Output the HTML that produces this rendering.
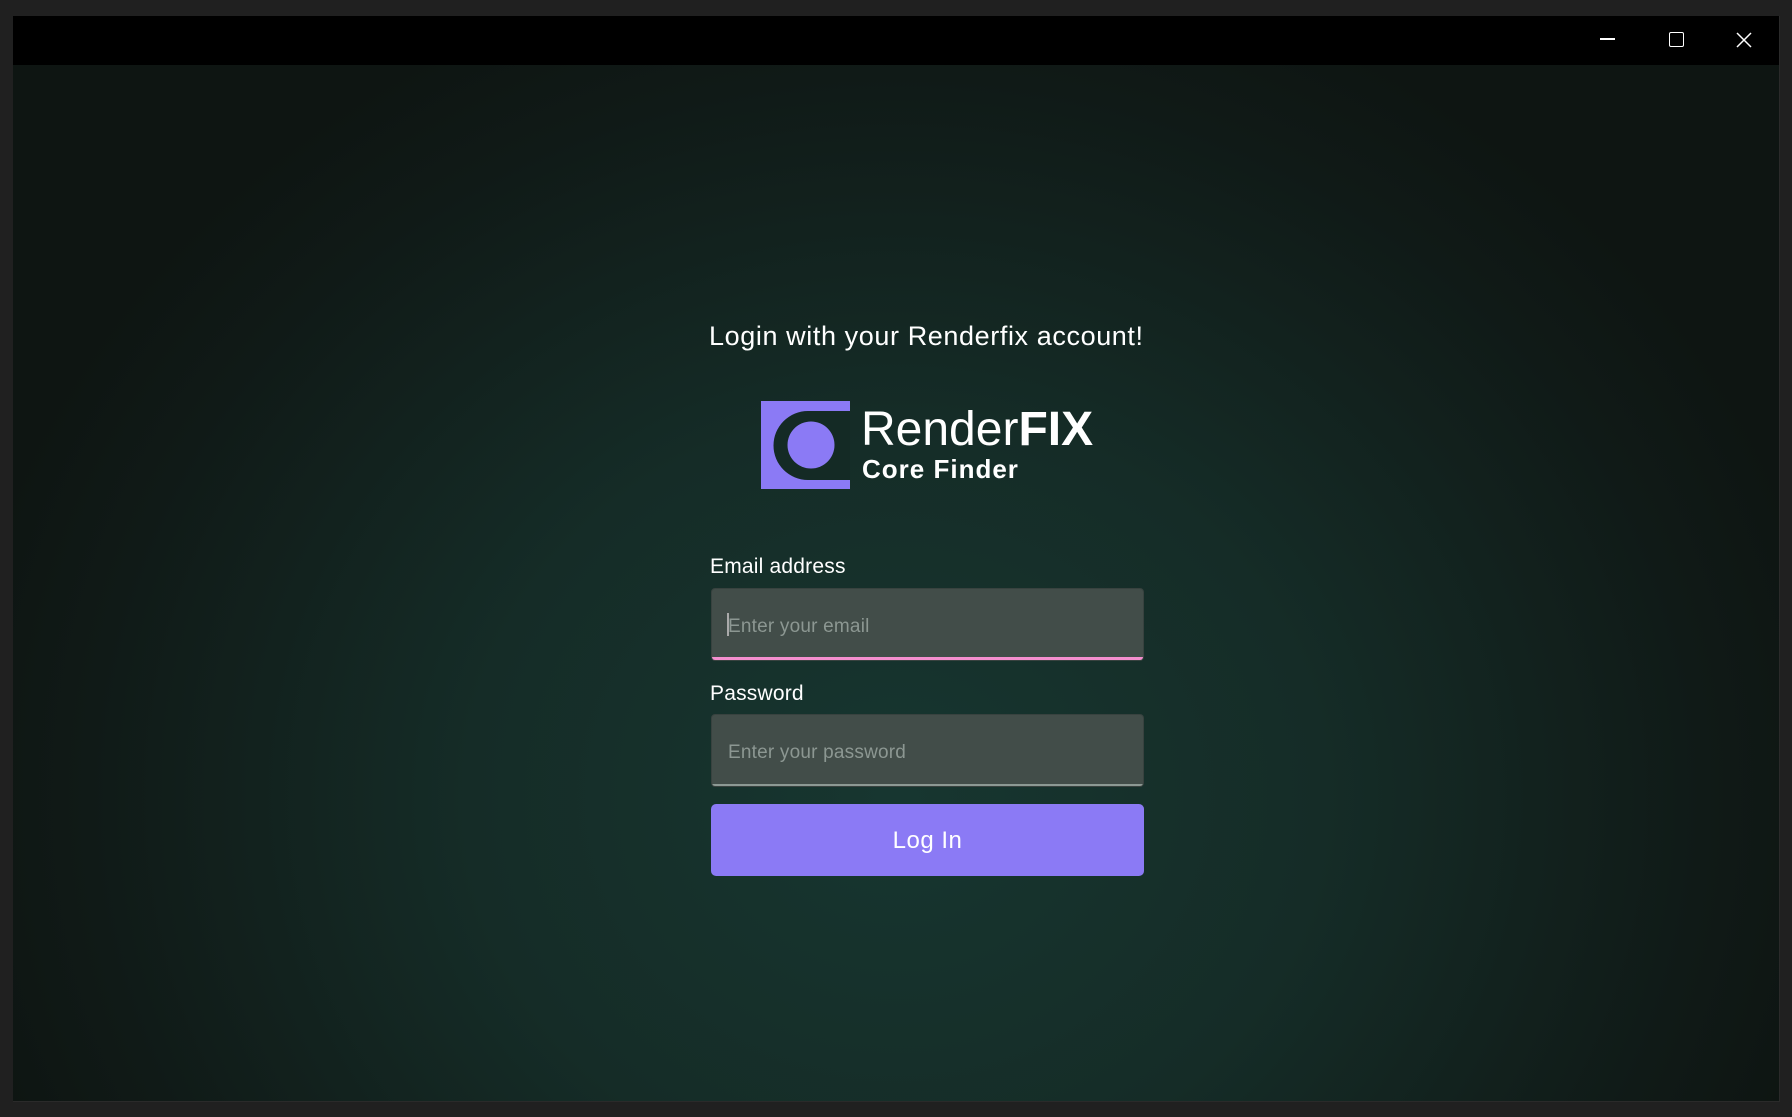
<!DOCTYPE html>
<html><head><meta charset="utf-8"><style>
*{margin:0;padding:0;box-sizing:border-box}
body{width:1792px;height:1117px;background:#202020;position:relative;overflow:hidden;font-family:"Liberation Sans",sans-serif}
.win{position:absolute;left:13px;top:16px;width:1767px;height:1086px;background:radial-gradient(ellipse 950px 850px at 50% 72%,#173630 0%,#152c27 45%,#101a17 85%,#0e1512 100%);border-right:1px solid #2a2a2a;border-bottom:1px solid #2a2a2a}
.tb{position:absolute;left:0;top:0;right:0;height:49px;background:#000}
.t{position:absolute;color:#fff;white-space:nowrap}
.inp{position:absolute;left:711px;width:433px;height:73px;background:#424d49;border:1px solid #38423f;border-radius:4px;overflow:hidden}
.ph{position:absolute;left:16px;top:27px;font-size:19px;color:#8c9792;letter-spacing:0.2px}
</style></head><body>
<div class="win">
<div class="tb">
<div style="position:absolute;left:1587px;top:22px;width:15px;height:1.5px;background:#fff"></div>
<div style="position:absolute;left:1656px;top:16px;width:15px;height:15px;border:1.5px solid #fff;border-radius:2px"></div>
<svg style="position:absolute;left:1723px;top:16px" width="16" height="16"><path d="M1 1L15 15M15 1L1 15" stroke="#fff" stroke-width="1.5"/></svg>
</div>
</div>
<div class="t" style="left:709px;top:321px;font-size:27px;letter-spacing:0.6px">Login with your Renderfix account!</div>
<svg style="position:absolute;left:761px;top:401px" width="89" height="88" viewBox="0 0 89 88">
<rect width="89" height="88" fill="#8b7af5"/>
<path d="M89 10H47A34.5 34.5 0 0 0 47 79H89Z" fill="#142a25"/>
<circle cx="50" cy="44" r="23.5" fill="#8b7af5"/>
</svg>
<div class="t" style="left:861px;top:402px;font-size:48px;line-height:56px;font-weight:300;letter-spacing:0px">Render<b style="font-weight:700">FIX</b></div>
<div class="t" style="left:862px;top:454px;font-size:26px;line-height:30px;font-weight:700;letter-spacing:1px">Core Finder</div>
<div class="t" style="left:710px;top:555px;font-size:21px;letter-spacing:0.2px">Email address</div>
<div class="inp" style="top:588px"><div style="position:absolute;left:15px;top:24px;width:1.5px;height:23px;background:#aaa"></div><div class="ph">Enter your email</div><div style="position:absolute;left:0;right:0;bottom:0;height:3px;background:#f58fcf"></div></div>
<div class="t" style="left:710px;top:682px;font-size:21px;letter-spacing:0.2px">Password</div>
<div class="inp" style="top:714px"><div class="ph">Enter your password</div><div style="position:absolute;left:0;right:0;bottom:0;height:2px;background:#8d9994"></div></div>
<div style="position:absolute;left:711px;top:804px;width:433px;height:72px;background:#8b7af5;border-radius:5px;color:#fff;font-size:24px;text-align:center;line-height:74px;letter-spacing:0.5px">Log In</div>
</body></html>
